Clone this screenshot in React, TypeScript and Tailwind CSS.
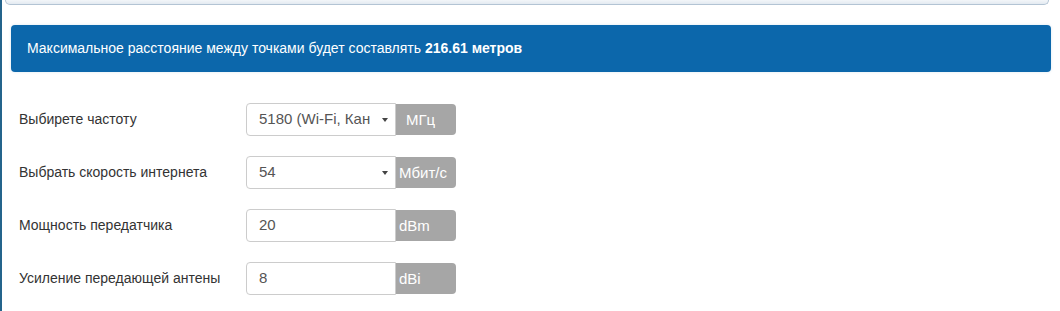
const rows = [
  { label: "Выбирете частоту", value: "5180 (Wi-Fi, Кан", unit: "МГц", select: true, unitPad: "pl-[10px]" },
  { label: "Выбрать скорость интернета", value: "54", unit: "Мбит/с", select: true, unitPad: "pl-[3px]" },
  { label: "Мощность передатчика", value: "20", unit: "dBm", select: false, unitPad: "pl-[3px]" },
  { label: "Усиление передающей антены", value: "8", unit: "dBi", select: false, unitPad: "pl-[3px]" },
];

function Arrow() {
  return (
    <svg width="6" height="4" viewBox="0 0 6 4" className="absolute right-[7px] top-[14px]">
      <path d="M0 0h6L3 4z" fill="#444" />
    </svg>
  );
}

export default function App() {
  return (
    <div className="flex h-[311px] w-[1060px] overflow-hidden bg-white font-['Liberation_Sans',Arial,sans-serif]">
      <div className="w-[2px] shrink-0 bg-[#24648c]" />
      <div className="flex-1">
        <div className="ml-[3px] mr-[11px] h-[5px] rounded-b-[8px] border-x border-b border-[#b3c4d4] bg-gradient-to-b from-[#f3f6f9] to-[#e3eaf1]" />

        <div className="ml-[9px] mr-[9px] mt-[20px] flex h-[47px] items-center rounded-[4px] bg-[#0c67ab] pl-[16px] text-[14px] text-white shadow-[0_0_3px_rgba(12,103,171,0.15)]">
          Максимальное расстояние между точками будет составлять&nbsp;<b>216.61 метров</b>
        </div>

        <div className="mt-[31px] flex flex-col gap-[20px] pl-[17px]">
          {rows.map((r) => (
            <div key={r.label} className="flex h-[33px] items-center">
              <div className="w-[227px] text-[14px] text-[#333]">{r.label}</div>
              <div className="relative flex h-[33px] w-[150px] items-center overflow-hidden whitespace-nowrap rounded-l-[4px] border border-[#ccc] bg-white pl-[12px] pr-[18px] text-[15px] text-[#555]">
                <span className="overflow-hidden">{r.value}</span>
                {r.select && <Arrow />}
              </div>
              <div
                className={`flex h-[31px] w-[60px] items-center overflow-hidden whitespace-nowrap rounded-r-[4px] bg-[#a6a6a6] pt-[1px] text-[15px] text-white ${r.unitPad}`}
              >
                {r.unit}
              </div>
            </div>
          ))}
        </div>
      </div>
    </div>
  );
}
